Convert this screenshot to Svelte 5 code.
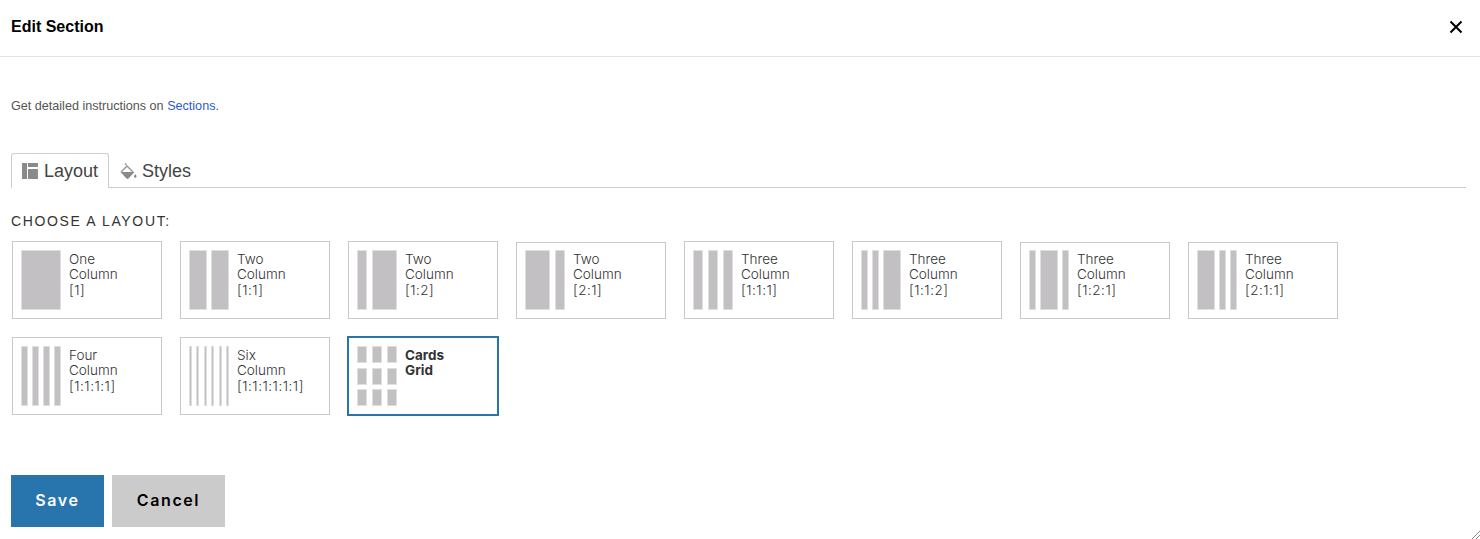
<script lang="ts">
  // widths are px inside the 40px thumbnail; bars are spread with space-between
  const layouts = [
    { top: 'One', bottom: 'Column', ratio: '[1]', bars: [40] },
    { top: 'Two', bottom: 'Column', ratio: '[1:1]', bars: [18, 18] },
    { top: 'Two', bottom: 'Column', ratio: '[1:2]', bars: [10, 25] },
    { top: 'Two', bottom: 'Column', ratio: '[2:1]', bars: [25, 10], low: true },
    { top: 'Three', bottom: 'Column', ratio: '[1:1:1]', bars: [10, 10, 10] },
    { top: 'Three', bottom: 'Column', ratio: '[1:1:2]', bars: [7, 7, 18] },
    { top: 'Three', bottom: 'Column', ratio: '[1:2:1]', bars: [7, 18, 7], low: true },
    { top: 'Three', bottom: 'Column', ratio: '[2:1:1]', bars: [18, 7, 7], low: true },
    { top: 'Four', bottom: 'Column', ratio: '[1:1:1:1]', bars: [7, 7, 7, 7] },
    { top: 'Six', bottom: 'Column', ratio: '[1:1:1:1:1:1]', bars: [3, 3, 3, 3, 3, 3] },
  ];
</script>

<div class="modal">
  <header class="modal__head">
    <h2>Edit Section</h2>
    <button type="button" class="modal__close" aria-label="Close">
      <svg width="14" height="14" viewBox="0 0 14 14" aria-hidden="true">
        <path d="M1.500 1.500l11 11M12.500 1.500l-11 11" stroke="#000" stroke-width="2" fill="none" />
      </svg>
    </button>
  </header>

  <div class="modal__body">
    <p class="hint">Get detailed instructions on <a href="#sections">Sections</a>.</p>

    <div class="tabs">
      <button type="button" class="tab tab--active">
        <svg width="16" height="16" viewBox="0 0 16 16" aria-hidden="true">
          <path d="M0 0h5v16H0zM6 0h10v4H6zM6 6h10v10H6z" fill="#8a8a8a" />
        </svg>
        Layout
      </button>
      <button type="button" class="tab">
        <svg width="17" height="17" viewBox="0 0 17 17" aria-hidden="true">
          <path d="M5 .5l1.500 1.500M1 9l6-6 6 6" stroke="#9a9a9a" stroke-width="1.500" fill="none" />
          <path d="M.5 9h14L8.500 15.500c-.6.600-1.400.600-2 0z" fill="#8a8a8a" />
          <path d="M15.300 11c.7 1 1.200 1.800 1.200 2.500a1.250 1.250 0 0 1-2.500 0c0-.7.600-1.500 1.300-2.500z" fill="#8a8a8a" />
        </svg>
        Styles
      </button>
    </div>

    <h3 class="choose">CHOOSE A LAYOUT:</h3>

    <div class="cards">
      {#each layouts as l}
        <button type="button" class={['card', l.low && 'card--low']}>
          <span class="thumb">
            {#each l.bars as w}
              <span class="bar" style={`width:${w}px`}></span>
            {/each}
          </span>
          <span class="card__label">{l.top}<br />{l.bottom}<br /><span class="ratio">{l.ratio}</span></span>
        </button>
      {/each}
      <button type="button" class="card card--selected">
        <span class="thumb thumb--grid">
          {#each Array(9) as _}
            <span class="cell"></span>
          {/each}
        </span>
        <span class="card__label">Cards<br />Grid</span>
      </button>
    </div>

    <div class="actions">
      <button type="button" class="btn btn--save">Save</button>
      <button type="button" class="btn btn--cancel">Cancel</button>
    </div>
  </div>

  <svg class="grip" width="8" height="8" viewBox="0 0 8 8" aria-hidden="true">
    <path d="M0 8l8-8M4 8l4-4" stroke="#8a8a8a" stroke-width="1" fill="none" />
  </svg>
</div>

<style>
  :global(body) {
    background: #fff;
  }
  .modal {
    position: relative;
    height: 539px;
    overflow: hidden;
    font-family: 'Liberation Sans', Arial, sans-serif;
    color: #333;
  }
  .modal__head {
    display: flex;
    align-items: center;
    justify-content: space-between;
    height: 57px;
    padding: 0 17px 2px 11px;
    box-sizing: border-box;
    border-bottom: 1px solid #e3e3e3;
  }
  h2 {
    margin: 0;
    font-size: 16px;
    font-weight: 700;
    color: #000;
  }
  .modal__close {
    display: flex;
    padding: 0;
    border: none;
    background: none;
    cursor: pointer;
  }
  .modal__body {
    padding: 42px 14px 0 11px;
  }
  .hint {
    margin: 0;
    font-size: 12.600px;
    line-height: 15px;
    color: #555;
  }
  .hint a {
    color: #2b5bdc;
    text-decoration: none;
  }
  .tabs {
    display: flex;
    margin-top: 39px;
    height: 35px;
    border-bottom: 1px solid #ccc;
    box-sizing: border-box;
  }
  .tab {
    display: flex;
    align-items: center;
    gap: 5px;
    height: 35px;
    padding: 0 10px;
    box-sizing: border-box;
    border: 1px solid transparent;
    border-bottom: none;
    border-radius: 3px 3px 0 0;
    background: none;
    font: inherit;
    font-size: 18px;
    color: #444;
    cursor: pointer;
  }
  .tab--active {
    width: 98px;
    gap: 6px;
    border-color: #ccc;
    background: #fff;
  }
  .choose {
    margin: 24px 0 0;
    font-size: 14px;
    line-height: 18px;
    font-weight: 400;
    letter-spacing: 1.640px;
    color: #333;
  }
  .cards {
    display: flex;
    flex-wrap: wrap;
    gap: 18px;
    width: 1340px;
    margin: 11px 0 0 1px;
  }
  .card {
    display: flex;
    align-items: flex-start;
    gap: 8px;
    width: 150px;
    height: 78px;
    padding: 8px;
    box-sizing: border-box;
    border: 1px solid #c9c9c9;
    background: #fff;
    text-align: left;
    font-family: Inter, 'Liberation Sans', sans-serif;
    font-size: 13.500px;
    font-weight: 300;
    line-height: 15.400px;
    color: #333;
    cursor: pointer;
  }
  /* these cards snap a pixel lower on their top edge in the reference */
  .card--low {
    height: 77px;
    margin-top: 1px;
    padding-top: 7px;
  }
  .card--selected {
    width: 152px;
    height: 80px;
    margin: -1px;
    border: 2px solid #2874ad;
    font-weight: 700;
    color: #333;
  }
  .thumb {
    display: flex;
    justify-content: space-between;
    flex: none;
    width: 40px;
    height: 60px;
  }
  .thumb--grid {
    display: grid;
    grid-template-columns: repeat(3, 10px);
    grid-template-rows: repeat(3, 17px);
    justify-content: space-between;
    align-content: space-between;
  }
  .bar,
  .cell {
    box-sizing: border-box;
    border: 1px solid #dfdfdf;
    background: #c2c0c2;
  }
  .card__label {
    padding-top: 2px;
  }
  .ratio {
    letter-spacing: 0.500px;
  }
  .actions {
    display: flex;
    gap: 8px;
    margin-top: 60px;
  }
  .btn {
    height: 52px;
    padding: 0 0 2px;
    border: none;
    font-family: Inter, 'Liberation Sans', sans-serif;
    font-size: 16px;
    font-weight: 600;
    letter-spacing: 1.600px;
    cursor: pointer;
  }
  .btn--save {
    width: 93px;
    background: #2874ad;
    color: #fff;
  }
  .btn--cancel {
    width: 113px;
    background: #cbcbcb;
    color: #000;
  }
  .grip {
    position: absolute;
    right: 0;
    bottom: 0;
  }
</style>
